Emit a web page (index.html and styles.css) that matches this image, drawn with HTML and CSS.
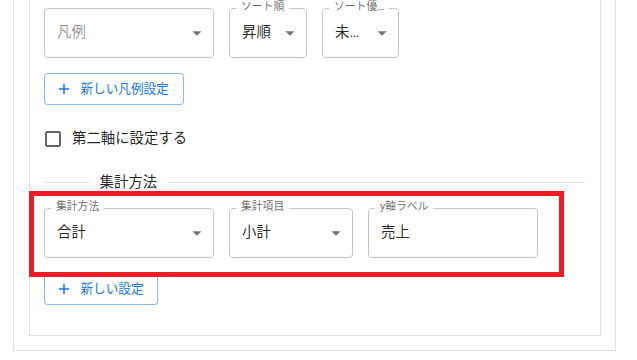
FILE: index.html
```html
<!DOCTYPE html>
<html lang="ja">
<head>
<meta charset="utf-8">
<title>集計設定</title>
<link rel="stylesheet" href="styles.css">
</head>
<body>
<div class="page">
  <div class="outer">
    <div class="inner">
      <div class="row">
        <div class="field w170">
          <span class="value placeholder">凡例</span>
          <svg class="arrow" viewBox="0 0 24 24"><path d="M7 10l5 5 5-5z"/></svg>
        </div>
        <div class="field w78">
          <span class="label">ソート順</span>
          <span class="value">昇順</span>
          <svg class="arrow" viewBox="0 0 24 24"><path d="M7 10l5 5 5-5z"/></svg>
        </div>
        <div class="field w77">
          <span class="label">ソート優…</span>
          <span class="value">未…</span>
          <svg class="arrow" viewBox="0 0 24 24"><path d="M7 10l5 5 5-5z"/></svg>
        </div>
      </div>

      <button class="add-btn" type="button">
        <svg class="plus" viewBox="0 0 24 24"><path d="M19 13h-6v6h-2v-6H5v-2h6V5h2v6h6v2z"/></svg>
        <span>新しい凡例設定</span>
      </button>

      <label class="check-row">
        <span class="checkbox"></span>
        <span class="check-text">第二軸に設定する</span>
      </label>

      <div class="divider"><span class="divider-text">集計方法</span></div>

      <div class="row row-agg">
        <div class="field w170">
          <span class="label">集計方法</span>
          <span class="value">合計</span>
          <svg class="arrow" viewBox="0 0 24 24"><path d="M7 10l5 5 5-5z"/></svg>
        </div>
        <div class="field w124">
          <span class="label">集計項目</span>
          <span class="value">小計</span>
          <svg class="arrow" viewBox="0 0 24 24"><path d="M7 10l5 5 5-5z"/></svg>
        </div>
        <div class="field w170">
          <span class="label">y軸ラベル</span>
          <span class="value">売上</span>
        </div>
      </div>

      <button class="add-btn add-btn-last" type="button">
        <svg class="plus" viewBox="0 0 24 24"><path d="M19 13h-6v6h-2v-6H5v-2h6V5h2v6h6v2z"/></svg>
        <span>新しい設定</span>
      </button>
    </div>
  </div>
  <div class="highlight"></div>
</div>
</body>
</html>
```

FILE: styles.css
```css
* {
  box-sizing: border-box;
}

html, body {
  margin: 0;
  padding: 0;
  background: #ffffff;
  overflow: hidden;
}

body {
  font-family: "Roboto", "Noto Sans CJK JP", sans-serif;
  color: rgba(0, 0, 0, 0.87);
  width: 637px;
  height: 360px;
}

.page {
  position: relative;
  display: flow-root;
  width: 637px;
  height: 360px;
}

.outer {
  margin: -30px 0 0 13px;
  width: 603px;
  border: 1px solid #e0e0e0;
  padding: 15px 14px 14px 15px;
}

.inner {
  border: 1px solid #e0e0e0;
  padding: 21px 15px 30px 14px;
  display: flex;
  flex-direction: column;
  align-items: flex-start;
}

.row {
  display: flex;
  gap: 15px;
}

.row-agg {
  margin-top: 15px;
}

.field {
  position: relative;
  height: 50px;
  border: 1px solid #c4c4c4;
  border-radius: 4px;
  display: flex;
  align-items: center;
  padding: 0 5px 0 12px;
}

.w170 { width: 170px; }
.w124 { width: 124px; }
.w78 { width: 78px; }
.w77 { width: 77px; }

.label {
  position: absolute;
  left: 6px;
  top: -8px;
  padding: 0 5px;
  background: #ffffff;
  font-size: 10.8px;
  line-height: 12px;
  color: rgba(0, 0, 0, 0.6);
  white-space: nowrap;
}

.value {
  flex: 1;
  font-size: 14.4px;
  line-height: 20px;
  white-space: nowrap;
  overflow: hidden;
}

.placeholder {
  color: rgba(0, 0, 0, 0.45);
}

.arrow {
  width: 22px;
  height: 22px;
  flex: none;
  fill: rgba(0, 0, 0, 0.54);
}

.add-btn {
  margin-top: 15px;
  height: 32px;
  display: flex;
  align-items: center;
  padding: 0 14px 0 10px;
  border: 1px solid rgba(25, 118, 210, 0.5);
  border-radius: 4px;
  background: #ffffff;
  color: #1976d2;
  font-family: "Roboto", "Noto Sans CJK JP", sans-serif;
  font-size: 12.6px;
  font-weight: 400;
  line-height: 20px;
}

.add-btn-last {
  margin-top: 15px;
}

.plus {
  width: 18px;
  height: 18px;
  fill: #1976d2;
  margin-right: 7.5px;
  flex: none;
}

.check-row {
  margin-top: 15px;
  height: 38px;
  display: flex;
  align-items: center;
}

.checkbox {
  width: 16px;
  height: 16px;
  margin-left: 1px;
  border: 2px solid rgba(0, 0, 0, 0.6);
  border-radius: 2px;
  flex: none;
}

.check-text {
  margin-left: 11px;
  font-size: 14.4px;
  line-height: 20px;
}

.divider {
  align-self: stretch;
  margin-top: 14px;
  height: 21px;
  display: flex;
  align-items: center;
}

.divider::before {
  content: "";
  width: 46px;
  border-top: 1px solid #e0e0e0;
}

.divider::after {
  content: "";
  flex: 1;
  border-top: 1px solid #e0e0e0;
}

.divider-text {
  padding: 0 9.6px;
  font-size: 14.4px;
  line-height: 21px;
  white-space: nowrap;
}

.highlight {
  position: absolute;
  left: 29px;
  top: 191px;
  width: 535px;
  height: 86px;
  border: 5px solid #ed1c24;
}
```
